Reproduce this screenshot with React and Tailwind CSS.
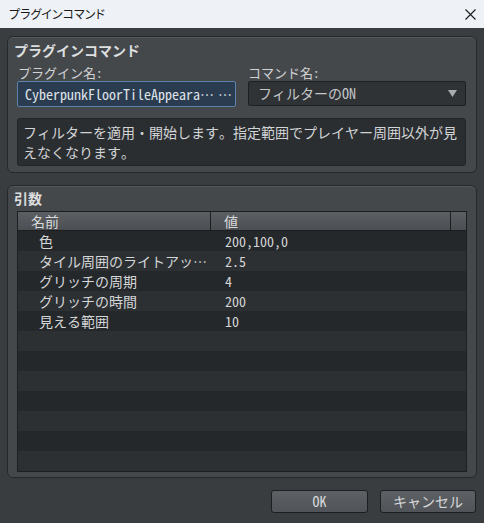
import React from 'react';

const mono = { fontFamily: '"Noto Sans Mono CJK JP", "Noto Sans CJK JP", "DejaVu Sans Mono", monospace' };

// centred full-width ellipsis used where a cell is truncated
const Dots = ({ className = '' }) => (
    <span className={`inline-block w-[14px] text-center ${className}`} style={{ fontFamily: '"Noto Sans CJK JP", sans-serif' }}>
        ⋯
    </span>
);

const params = [
    { name: '色', value: '200,100,0' },
    { name: 'タイル周囲のライトアッ', cut: true, value: '2.5' },
    { name: 'グリッチの周期', value: '4' },
    { name: 'グリッチの時間', value: '200' },
    { name: '見える範囲', value: '10' },
];

const ROWS = 12;

const Group = ({ title, className, children }) => (
    <div className={`rounded-[6px] border border-[#26282b] bg-[#45484b] shadow-[inset_0_1px_0_#55585b] ${className}`}>
        <div className="h-[18px] pl-[6px] text-[14px] font-bold leading-[18px] text-[#dcdedf]">{title}</div>
        {children}
    </div>
);

const ParamTable = () => {
    const rows = Array.from({ length: ROWS }, (_, i) => params[i] || null);
    return (
        <div className="mt-[4px] ml-[9px] mr-[9px] border border-[#1c1e20] bg-[#25282b]">
            <div className="flex h-[19px] border-b border-[#1c1e20] bg-gradient-to-b from-[#5c6064] to-[#4b4e52] text-[14px] leading-[19px] text-[#d8dadb]">
                <div className="w-[193px] border-r border-[#1c1e20] pl-[13px]">名前</div>
                <div className="flex-1 border-r border-[#1c1e20] pl-[13px]">値</div>
                <div className="w-[15px]" />
            </div>
            {rows.map((row, i) => (
                <div
                    key={i}
                    className={`flex h-[20px] text-[14px] leading-[20px] text-[#d4d6d7] ${i % 2 === 0 ? 'bg-[#25282b]' : 'bg-[#2d3033]'}`}
                >
                    <div className="w-[194px] overflow-hidden whitespace-nowrap pl-[21px]">
                        {row?.name}
                        {row?.cut && <Dots />}
                    </div>
                    <div className="flex-1 pl-[13px]">{row?.value}</div>
                </div>
            ))}
        </div>
    );
};

export default function App() {
    return (
        <div className="flex h-[523px] w-[484px] flex-col overflow-hidden bg-[#3a3d40]" style={mono}>
            {/* window title bar */}
            <div className="flex h-[28px] shrink-0 items-center justify-between bg-[#eef2f7] pl-[9px] pr-[8px]">
                <span
                    className="text-[12px] text-[#1a1a1a]"
                    style={{ fontFamily: '"Noto Sans CJK JP", sans-serif', fontFeatureSettings: '"palt"' }}
                >
                    プラグインコマンド
                </span>
                <svg width="11" height="11" viewBox="0 0 11 11">
                    <path d="M0.5 0.5 L10.5 10.5 M10.5 0.5 L0.5 10.5" stroke="#1a1a1a" strokeWidth="1.1" />
                </svg>
            </div>

            <div className="flex flex-1 flex-col px-[7px] pt-[8px]">
                <Group title="プラグインコマンド" className="h-[137px] pt-[4px]">
                    <div className="mt-[5px] flex gap-[12px] pl-[9px] pr-[10px]">
                        <div className="w-[219px]">
                            <div className="h-[17px] pl-[1px] text-[13px] leading-[17px] text-[#d0d2d4]">プラグイン名:</div>
                            <div className="flex h-[26px] items-center overflow-hidden whitespace-nowrap rounded-[2px] border border-[#5d83ad] bg-[#2c3c50] pl-[7px] text-[14px] text-[#dfe3e8]">
                                <span>CyberpunkFloorTileAppeara</span>
                                <Dots />
                                <Dots className="ml-[4px]" />
                            </div>
                        </div>
                        <div className="flex-1">
                            <div className="h-[17px] text-[13px] leading-[17px] text-[#d0d2d4]">コマンド名:</div>
                            <div className="flex h-[25px] items-center justify-between rounded-[2px] border border-[#1e2023] bg-[#303336] pl-[9px] pr-[8px] text-[14px] text-[#c4c6c8]">
                                <span>フィルターのON</span>
                                <svg width="9" height="7" viewBox="0 0 9 7">
                                    <path d="M0 0 H9 L4.5 7 Z" fill="#a9acaf" />
                                </svg>
                            </div>
                        </div>
                    </div>
                    <div className="mt-[11px] ml-[9px] mr-[10px] h-[48px] rounded-[3px] border border-[#222427] bg-[#2b2e31] px-[5px] pt-[3px] text-[14px] leading-[20px] text-[#d2d4d6]">
                        フィルターを適用・開始します。指定範囲でプレイヤー周囲以外が見えなくなります。
                    </div>
                </Group>

                <Group title="引数" className="mt-[12px] h-[293px] pt-[3px]">
                    <ParamTable />
                </Group>

                <div className="mt-[12px] flex justify-end gap-[12px] pr-[1px]">
                    <button className="h-[23px] w-[97px] rounded-[3px] border border-[#1c1e20] bg-gradient-to-b from-[#5d6165] to-[#505357] text-[14px] leading-[21px] text-[#d6d8da]">
                        OK
                    </button>
                    <button className="h-[23px] w-[96px] rounded-[3px] border border-[#1c1e20] bg-gradient-to-b from-[#5d6165] to-[#505357] text-[14px] leading-[21px] text-[#d6d8da]">
                        キャンセル
                    </button>
                </div>
            </div>
        </div>
    );
}
